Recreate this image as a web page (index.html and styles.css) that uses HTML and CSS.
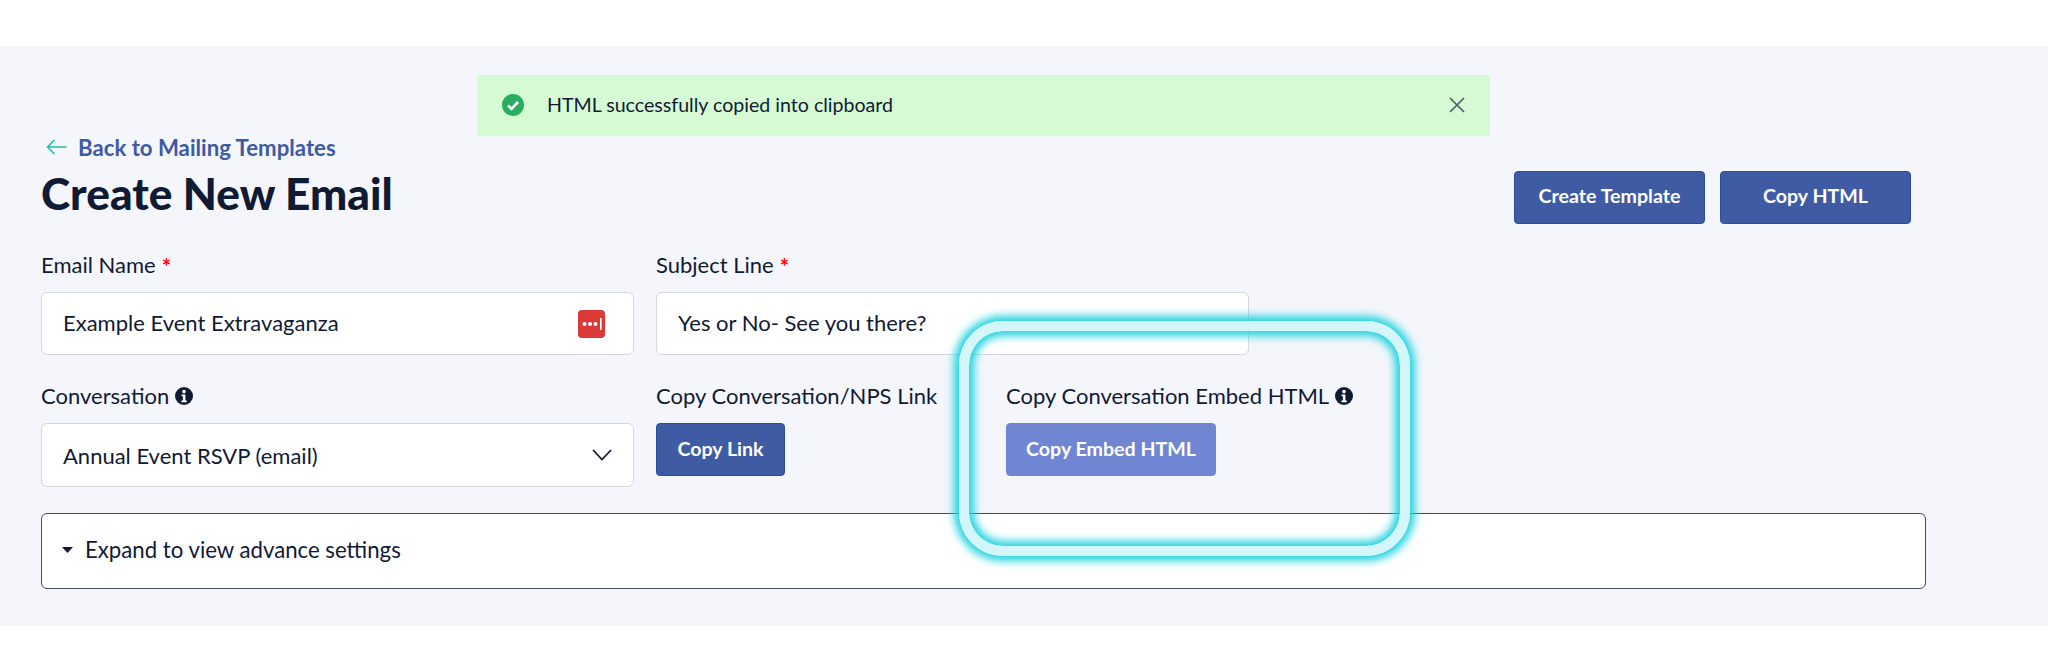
FILE: index.html
```html
<!DOCTYPE html>
<html lang="en">
<head>
<meta charset="utf-8">
<title>Create New Email</title>
<link rel="stylesheet" href="styles.css">
</head>
<body>
<div class="topbar"></div>
<main class="page">
  <a class="back" href="#">
    <svg class="back-arrow" viewBox="0 0 21 16" width="21" height="16"><path d="M20.5 8H1.5M8.5 1L1.5 8l7 7" fill="none" stroke="#1fbfa8" stroke-width="1.6"/></svg>
    <span>Back to Mailing Templates</span>
  </a>
  <div class="title-row">
    <h1>Create New Email</h1>
    <div class="actions">
      <button class="btn btn-wide">Create Template</button>
      <button class="btn btn-wide">Copy HTML</button>
    </div>
  </div>
  <div class="row row-first">
    <div class="field">
      <label>Email Name <span class="req">*</span></label>
      <div class="input">
        <span>Example Event Extravaganza</span>
        <svg class="lock" viewBox="0 0 27 28" width="27" height="28"><rect width="27" height="28" rx="4" fill="#db3a36"/><circle cx="6.5" cy="14" r="2" fill="#fff"/><circle cx="12" cy="14" r="2" fill="#fff"/><circle cx="17.5" cy="14" r="2" fill="#fff"/><rect x="22" y="8" width="1.6" height="12" fill="#fff"/></svg>
      </div>
    </div>
    <div class="field">
      <label>Subject Line <span class="req">*</span></label>
      <div class="input"><span>Yes or No- See you there?</span></div>
    </div>
  </div>
  <div class="row row-second">
    <div class="field">
      <label>Conversation <svg class="info" viewBox="0 0 18 18" width="18" height="18"><circle cx="9" cy="9" r="9" fill="#111a33"/><circle cx="9" cy="4.6" r="1.8" fill="#fff"/><path d="M6.6 7.4h3.8v6h1.4v1.8H6.4v-1.8h1.5V9.2H6.6z" fill="#fff"/></svg></label>
      <div class="input input-select">
        <span>Annual Event RSVP (email)</span>
        <svg class="chev" viewBox="0 0 20 12" width="20" height="12"><path d="M1 1l9 9.5L19 1" fill="none" stroke="#111a33" stroke-width="1.8"/></svg>
      </div>
    </div>
    <div class="field field-link">
      <label>Copy Conversation/NPS Link</label>
      <button class="btn btn-link">Copy Link</button>
    </div>
    <div class="field field-embed">
      <label>Copy Conversation Embed HTML <svg class="info" viewBox="0 0 18 18" width="18" height="18"><circle cx="9" cy="9" r="9" fill="#111a33"/><circle cx="9" cy="4.6" r="1.8" fill="#fff"/><path d="M6.6 7.4h3.8v6h1.4v1.8H6.4v-1.8h1.5V9.2H6.6z" fill="#fff"/></svg></label>
      <button class="btn btn-embed">Copy Embed HTML</button>
    </div>
  </div>
  <div class="expand">
    <svg class="caret" viewBox="0 0 11 6" width="11" height="6"><path d="M0 0h11L5.5 6z" fill="#111a33"/></svg>
    <span>Expand to view advance settings</span>
  </div>
  <div class="alert">
    <svg class="check" viewBox="0 0 22 22" width="22" height="22"><circle cx="11" cy="11" r="11" fill="#27ae60"/><path d="M6 11.5l3.5 3.5L16 8" fill="none" stroke="#fff" stroke-width="2.6"/></svg>
    <span class="alert-text">HTML successfully copied into clipboard</span>
    <svg class="close" viewBox="0 0 16 16" width="16" height="16"><path d="M1 1l14 14M15 1L1 15" fill="none" stroke="#555c66" stroke-width="1.7"/></svg>
  </div>
  <div class="highlight"></div>
</main>
</body>
</html>
```

FILE: styles.css
```css
* { box-sizing: border-box; }
html, body { margin: 0; padding: 0; background: #fff; }
body { font-family: Lato, "Open Sans", sans-serif; color: #111a33; height: 672px; overflow: hidden; }
.topbar { height: 46px; background: #fff; box-shadow: 0 1px 3px rgba(0,0,0,.06); position: relative; }
.page { position: relative; height: 580px; background: #f5f6fb; padding: 89px 0 0 41px; }

.back { display: flex; align-items: center; gap: 11px; height: 24px; padding-left: 5px; color: #3d5aa3; font-size: 22.2px; font-weight: 700; text-decoration: none; }
.title-row { display: flex; justify-content: space-between; width: 1870px; height: 93px; }
h1 { margin: 8px 0 0; font-size: 44.2px; line-height: 52px; font-weight: 900; color: #111a33; }
.actions { display: flex; gap: 15px; padding-top: 12px; align-items: flex-start; }

.btn { border: 1px solid #2c4d9c; border-radius: 4px; background: #3f5ba3; color: #fff; font: 700 19.6px Lato, sans-serif; height: 53px; padding: 0 0 3px; }
.btn-wide { width: 191px; padding-bottom: 5px; }
.btn-link { width: 129px; }
.btn-embed { width: 210px; background: #7086d2; border-color: #7086d2; }

.row { display: flex; gap: 22px; }
.row-first { height: 132px; }
.row-second { height: 129px; }
.field { width: 593px; }
.field-link { width: 328px; }
.field-embed { width: 420px; }
label { display: flex; align-items: center; gap: 6px; height: 26px; font-size: 22px; line-height: 26px; color: #111a33; }
.row-first label { margin-bottom: 14px; }
.row-second label { margin-bottom: 13px; padding-bottom: 2px; }
.req { color: #f00; font-weight: 700; margin-top: 3px; }
.input { display: flex; align-items: center; justify-content: space-between; height: 63px; padding: 0 28px 3px 21px; background: #fff; border: 1px solid #d5d7de; border-radius: 6px; font-size: 22px; color: #111a33; }
.input-select { height: 64px; padding-bottom: 0; }
.lock { margin-top: 3px; }
.chev { margin-right: -7px; }

.expand { display: flex; align-items: center; gap: 12px; width: 1885px; height: 76px; padding: 0 0 3px 20px; background: #fff; border: 1px solid #454b59; border-radius: 6px; font-size: 22.2px; }

.alert { position: absolute; left: 477px; top: 29px; width: 1013px; height: 61px; display: flex; align-items: center; padding: 0 25px 1px; background: #d6fad4; font-size: 19.6px; }
.alert-text { margin-left: 23px; flex: 1; padding-bottom: 2px; }

.highlight { position: absolute; left: 959px; top: 275px; width: 451px; height: 235px; border: 10px solid #d2f6f9; border-radius: 44px; box-shadow: 0 0 8px 5px #22d3e0, inset 0 0 8px 5px #22d3e0; pointer-events: none; }
```
